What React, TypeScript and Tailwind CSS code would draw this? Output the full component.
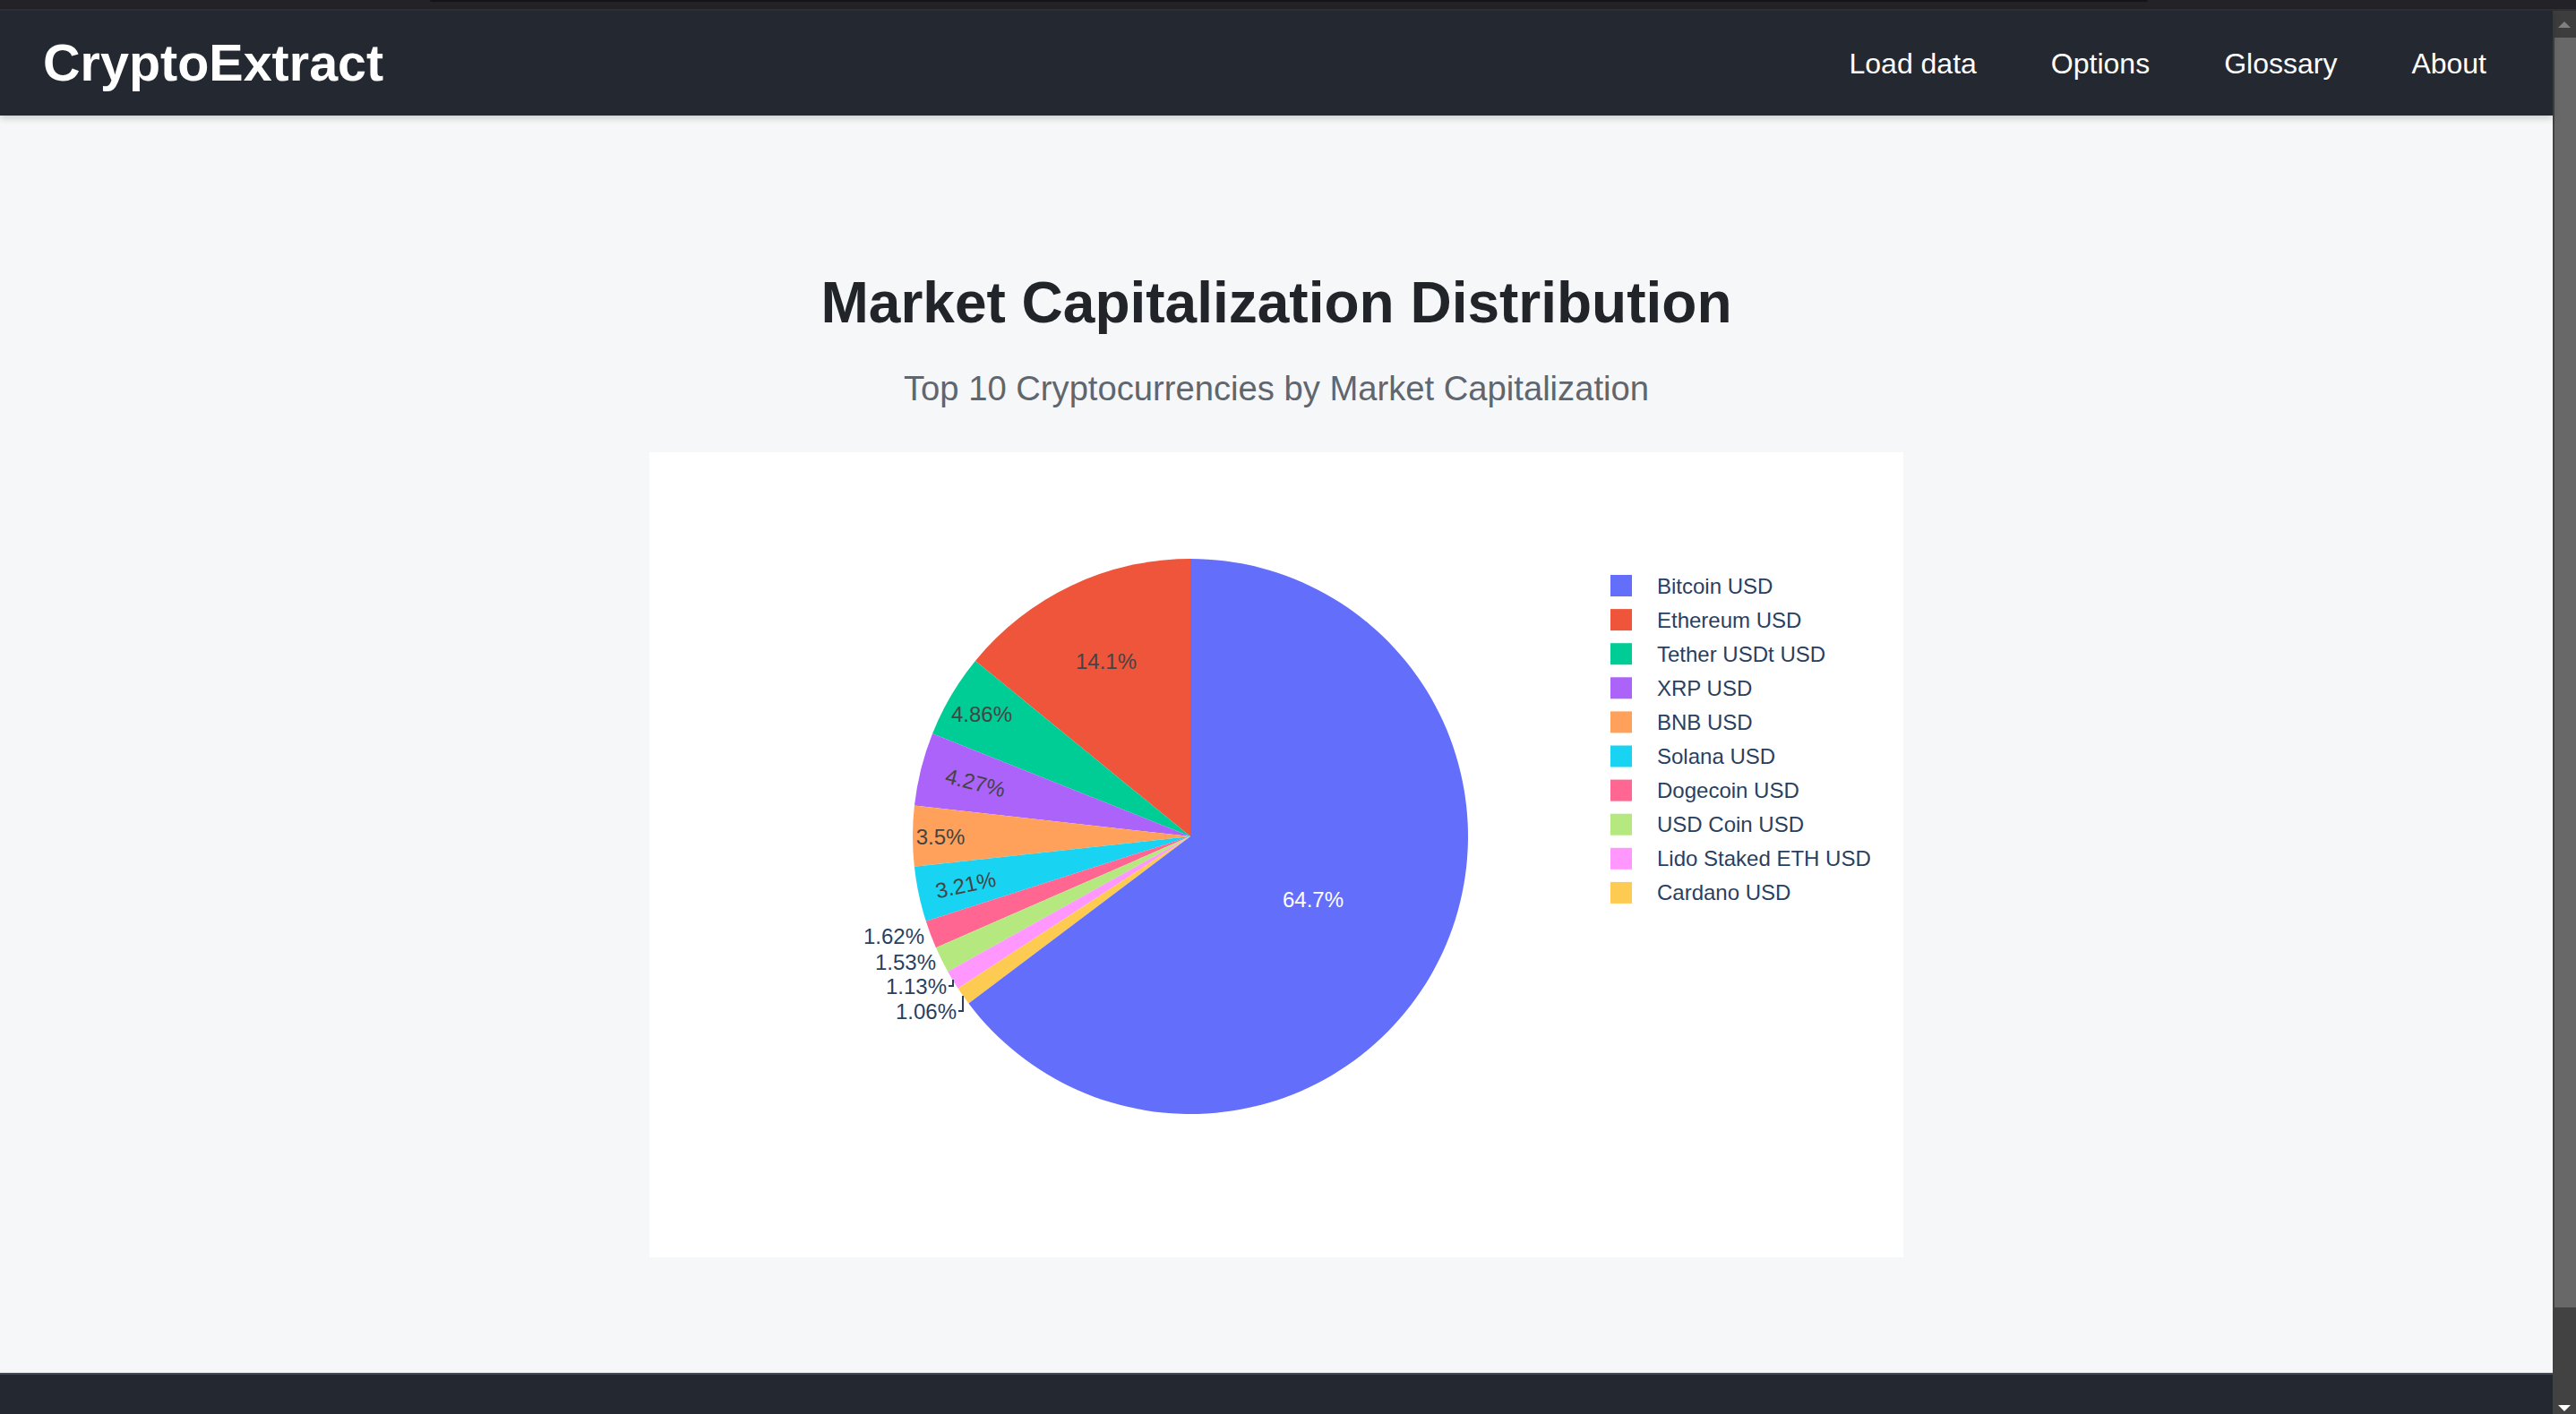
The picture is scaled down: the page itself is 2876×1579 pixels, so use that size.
import React from 'react';

const SLICES = [
  { label: 'Ethereum USD', pct: 14.1, color: '#EF553B' },
  { label: 'Tether USDt USD', pct: 4.86, color: '#00CC96' },
  { label: 'XRP USD', pct: 4.27, color: '#AB63FA' },
  { label: 'BNB USD', pct: 3.5, color: '#FFA15A' },
  { label: 'Solana USD', pct: 3.21, color: '#19D3F3' },
  { label: 'Dogecoin USD', pct: 1.62, color: '#FF6692' },
  { label: 'USD Coin USD', pct: 1.53, color: '#B6E880' },
  { label: 'Lido Staked ETH USD', pct: 1.13, color: '#FF97FF' },
  { label: 'Cardano USD', pct: 1.06, color: '#FECB52' },
  { label: 'Bitcoin USD', pct: 64.72, color: '#636EFA' },
];

const LEGEND = [
  ['Bitcoin USD', '#636EFA'],
  ['Ethereum USD', '#EF553B'],
  ['Tether USDt USD', '#00CC96'],
  ['XRP USD', '#AB63FA'],
  ['BNB USD', '#FFA15A'],
  ['Solana USD', '#19D3F3'],
  ['Dogecoin USD', '#FF6692'],
  ['USD Coin USD', '#B6E880'],
  ['Lido Staked ETH USD', '#FF97FF'],
  ['Cardano USD', '#FECB52'],
];

const CX = 604;
const CY = 429;
const R = 310;

// angle measured counter-clockwise from 12 o'clock, in degrees
function pt(deg: number, r = R) {
  const a = (deg * Math.PI) / 180;
  return [CX - r * Math.sin(a), CY - r * Math.cos(a)];
}

function slicePath(a0: number, a1: number) {
  const [x0, y0] = pt(a0);
  const [x1, y1] = pt(a1);
  const large = a1 - a0 > 180 ? 1 : 0;
  return `M${CX},${CY} L${x0},${y0} A${R},${R} 0 ${large} 0 ${x1},${y1} Z`;
}

const FONT = '"Liberation Sans", Arial, sans-serif';

function PieChart() {
  let acc = 0;
  const paths = SLICES.map((s) => {
    const a0 = acc;
    const a1 = acc + (s.pct / 100) * 360;
    acc = a1;
    return <path key={s.label} d={slicePath(a0, Math.min(a1, 359.999))} fill={s.color} />;
  });

  const inside: { t: string; x: number; y: number; rot: number; fill: string }[] = [
    { t: '64.7%', x: 741, y: 499, rot: 0, fill: '#ffffff' },
    { t: '14.1%', x: 510, y: 233, rot: 0, fill: '#444444' },
    { t: '4.86%', x: 371, y: 292, rot: 0, fill: '#444444' },
    { t: '4.27%', x: 364, y: 369, rot: 14, fill: '#444444' },
    { t: '3.5%', x: 325, y: 429, rot: 0, fill: '#444444' },
    { t: '3.21%', x: 353, y: 483, rot: -12, fill: '#444444' },
  ];

  const outside = [
    { t: '1.62%', x: 307, y: 540 },
    { t: '1.53%', x: 320, y: 569 },
    { t: '1.13%', x: 332, y: 596 },
    { t: '1.06%', x: 343, y: 624 },
  ];

  return (
    <svg width={1400} height={899} viewBox="0 0 1400 899" style={{ fontFamily: FONT }}>
      {paths}
      {inside.map((l) => (
        <text
          key={l.t}
          x={l.x}
          y={l.y}
          fontSize={24}
          fill={l.fill}
          textAnchor="middle"
          dominantBaseline="central"
          transform={`rotate(${l.rot} ${l.x} ${l.y})`}
        >
          {l.t}
        </text>
      ))}
      {outside.map((l) => (
        <text key={l.t} x={l.x} y={l.y} fontSize={24} fill="#2a3f5f" textAnchor="end" dominantBaseline="central">
          {l.t}
        </text>
      ))}
      <polyline points="339,589 339,596 334,596" fill="none" stroke="#2a3f5f" strokeWidth={2} />
      <polyline points="350,607 350,624 345,624" fill="none" stroke="#2a3f5f" strokeWidth={2} />

      {LEGEND.map(([name, color], i) => (
        <g key={name}>
          <rect x={1073} y={149 + i * 38.1 - 12} width={24} height={24} fill={color} />
          <text x={1125} y={149 + i * 38.1} fontSize={24} fill="#2a3f5f" dominantBaseline="central">
            {name}
          </text>
        </g>
      ))}
    </svg>
  );
}

export default function App() {
  return (
    <div className="flex flex-col w-full h-[1579px] overflow-hidden bg-[#232327]" style={{ fontFamily: FONT }}>
      {/* browser strip */}
      <div className="h-[12px] shrink-0 flex flex-col">
        <div className="h-[10px] flex">
          <div className="w-[480px]" />
          <div className="w-[1918px] h-[2px] bg-[#141417] rounded-b-sm" />
        </div>
        <div className="h-[2px] bg-[#2f3035]" />
      </div>

      <div className="flex flex-1 min-h-0">
        <div className="flex flex-col flex-1 min-w-0">
          <nav className="h-[117px] shrink-0 bg-[#242830] flex items-center justify-between pl-[48px] pr-[74px] shadow-[0_3px_8px_rgba(0,0,0,0.18)] relative z-10">
            <span className="text-white font-bold text-[57.5px]">CryptoExtract</span>
            <div className="flex items-center gap-[83px] text-[32px] text-white">
              <span>Load data</span>
              <span>Options</span>
              <span>Glossary</span>
              <span>About</span>
            </div>
          </nav>

          <main className="flex-1 bg-[#f6f7f9] flex flex-col items-center">
            <h1 className="mt-[171px] text-[64px] leading-[77px] font-bold text-[#212529]">
              Market Capitalization Distribution
            </h1>
            <p className="mt-[34px] text-[38.2px] leading-[46px] text-[#5f666e]">
              Top 10 Cryptocurrencies by Market Capitalization
            </p>
            <div className="mt-[48px] w-[1400px] h-[899px] bg-white">
              <PieChart />
            </div>
          </main>

          <footer className="h-[46px] shrink-0 bg-[#242830] border-t-2 border-[#454c58]" />
        </div>

        {/* scrollbar */}
        <div className="w-[26px] shrink-0 bg-[#424242] flex flex-col">
          <div className="h-[30px] flex items-center justify-center bg-[#3d3d3d]">
            <div className="w-0 h-0 border-l-[7px] border-r-[7px] border-b-[7px] border-l-transparent border-r-transparent border-b-[#808080]" />
          </div>
          <div className="ml-[2px] h-[1418px] bg-[#686868]" />
          <div className="flex-1 flex items-end justify-center pb-[3px]">
            <div className="w-0 h-0 border-l-[7px] border-r-[7px] border-t-[7px] border-l-transparent border-r-transparent border-t-white" />
          </div>
        </div>
      </div>
    </div>
  );
}
